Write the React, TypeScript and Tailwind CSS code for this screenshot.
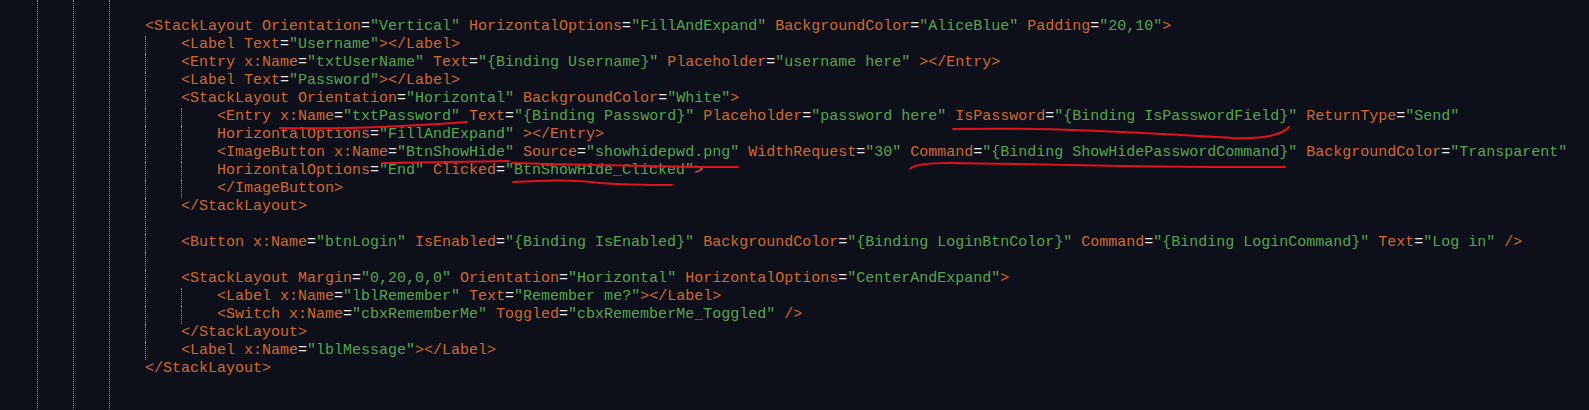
import React from 'react'

type Line = { guides: number; text: string }

const lines: Line[] = [
  { guides: 0, text: '<StackLayout Orientation="Vertical" HorizontalOptions="FillAndExpand" BackgroundColor="AliceBlue" Padding="20,10">' },
  { guides: 1, text: '<Label Text="Username"></Label>' },
  { guides: 1, text: '<Entry x:Name="txtUserName" Text="{Binding Username}" Placeholder="username here" ></Entry>' },
  { guides: 1, text: '<Label Text="Password"></Label>' },
  { guides: 1, text: '<StackLayout Orientation="Horizontal" BackgroundColor="White">' },
  { guides: 2, text: '<Entry x:Name="txtPassword" Text="{Binding Password}" Placeholder="password here" IsPassword="{Binding IsPasswordField}" ReturnType="Send"' },
  { guides: 2, text: 'HorizontalOptions="FillAndExpand" ></Entry>' },
  { guides: 2, text: '<ImageButton x:Name="BtnShowHide" Source="showhidepwd.png" WidthRequest="30" Command="{Binding ShowHidePasswordCommand}" BackgroundColor="Transparent"' },
  { guides: 2, text: 'HorizontalOptions="End" Clicked="BtnShowHide_Clicked">' },
  { guides: 2, text: '</ImageButton>' },
  { guides: 1, text: '</StackLayout>' },
  { guides: 1, text: '' },
  { guides: 1, text: '<Button x:Name="btnLogin" IsEnabled="{Binding IsEnabled}" BackgroundColor="{Binding LoginBtnColor}" Command="{Binding LoginCommand}" Text="Log in" />' },
  { guides: 1, text: '' },
  { guides: 1, text: '<StackLayout Margin="0,20,0,0" Orientation="Horizontal" HorizontalOptions="CenterAndExpand">' },
  { guides: 2, text: '<Label x:Name="lblRemember" Text="Remember me?"></Label>' },
  { guides: 2, text: '<Switch x:Name="cbxRememberMe" Toggled="cbxRememberMe_Toggled" />' },
  { guides: 1, text: '</StackLayout>' },
  { guides: 1, text: '<Label x:Name="lblMessage"></Label>' },
  { guides: 0, text: '</StackLayout>' },
]

// strings green, "=" white, everything else (tags, attribute names) orange
function Tokens({ text }: { text: string }) {
  const parts = text.match(/("[^"]*"?)|(=)|([^"=]+)/g) || []
  return (
    <>
      {parts.map((p, i) => {
        let cls = 'text-[#d26a2c]'
        if (p.startsWith('"')) cls = 'text-[#58a64b]'
        else if (p === '=') cls = 'text-[#e6e6e6]'
        return (
          <span key={i} className={cls}>
            {p}
          </span>
        )
      })}
    </>
  )
}

function Guide() {
  return <span className="w-[36px] shrink-0 self-stretch border-l border-dotted border-[#8d919b]" />
}

export default function App() {
  return (
    <div
      className="relative flex h-[410px] w-full overflow-hidden bg-[#0d101b] text-[15px] leading-[18px]"
      style={{ fontFamily: '"Liberation Mono", "Courier New", monospace' }}
    >
      {/* left gutter indent guides */}
      <div className="w-[37px] shrink-0" />
      <div className="w-[36px] shrink-0 border-l border-dotted border-[#8d919b]" />
      <div className="w-[36px] shrink-0 border-l border-dotted border-[#8d919b]" />
      <div className="w-[36px] shrink-0 border-l border-dotted border-[#8d919b]" />

      {/* code */}
      <div className="flex flex-1 flex-col pt-[18px]">
        {lines.map((l, i) => (
          <div key={i} className="flex h-[18px] whitespace-pre">
            {l.guides >= 1 && <Guide />}
            {l.guides >= 2 && <Guide />}
            <span>
              <Tokens text={l.text} />
            </span>
          </div>
        ))}
      </div>

      {/* hand drawn red underlines */}
      <svg className="pointer-events-none absolute left-0 top-0" width="1589" height="410" fill="none">
        <g stroke="#e3131b" strokeWidth="2" strokeLinecap="round">
          <path d="M280,128 C330,129 400,127 467,122" />
          <path d="M953,129 C1060,127 1160,134 1232,138 C1262,139 1282,135 1289,127" />
          <path d="M383,163 C420,162 470,162 509,161" />
          <path d="M512,163 C600,165 680,167 738,167" />
          <path d="M910,169 C913,165 926,163 950,163 C1050,164 1150,168 1285,167" />
          <path d="M513,182 C545,180 575,179 600,183 C630,185 650,185 672,185" />
        </g>
      </svg>
    </div>
  )
}
